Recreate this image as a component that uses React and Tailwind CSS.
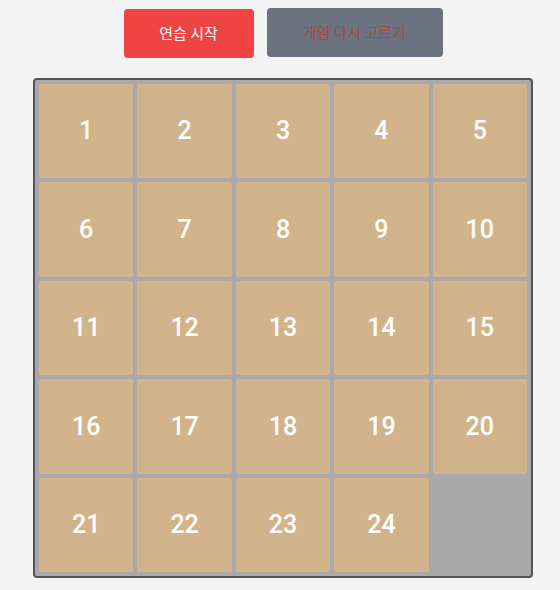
import React from "react";

export default function App() {
  const tiles = Array.from({ length: 24 }, (_, i) => i + 1);
  return (
    <div className="min-h-[590px] w-[560px] bg-[#f3f3f3] pl-[6px] pt-[8px]" style={{ fontFamily: "Roboto, 'Noto Sans', 'Noto Sans CJK KR', sans-serif" }}>
      <div className="flex flex-col items-center">
        <div className="flex items-start gap-[13px]">
          <button className="mt-[1px] h-[49px] w-[130px] rounded-[4px] bg-[#ef4444] text-[15px] text-white" style={{ fontFamily: "'Noto Sans CJK KR', sans-serif" }}>
            연습 시작
          </button>
          <button className="h-[49px] w-[176px] rounded-[4px] bg-[#6b7280] text-[15px] text-[#ad4a40]" style={{ fontFamily: "'Noto Sans CJK KR', sans-serif" }}>
            게임 다시 고르기
          </button>
        </div>
        <div className="mt-[20px] w-[500px] rounded-[4px] border-2 border-[#555555] bg-[#a9a9a9] p-1">
          <div className="grid grid-cols-5 gap-1">
            {tiles.map((n) => (
              <div
                key={n}
                className="flex aspect-square items-center justify-center rounded-[3px] bg-[#d2b48c] text-[25px] font-medium text-white"
              >
                {n}
              </div>
            ))}
            <div className="aspect-square" />
          </div>
        </div>
      </div>
    </div>
  );
}
